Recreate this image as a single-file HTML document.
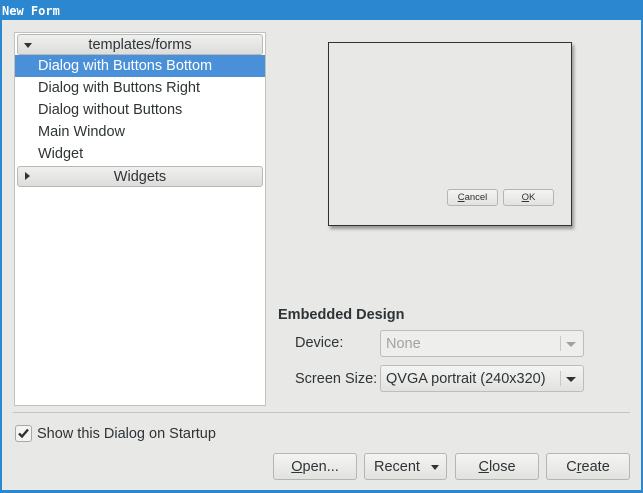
<!DOCTYPE html>
<html><head><style>
*{box-sizing:border-box;margin:0;padding:0}
body{width:643px;height:493px;overflow:hidden;background:#2a87d0;font-family:"Liberation Sans",sans-serif;font-size:14.5px;color:#2e3436;position:relative}
.a{position:absolute}
#title{left:0;top:0;width:643px;height:20px;color:#fff;font-family:"DejaVu Sans Mono","Liberation Mono",monospace;font-size:12px;font-weight:bold;line-height:22px;padding-left:2px}
#win{left:2px;top:20px;width:639px;height:470px;background:#e8e8e7}
#list{left:14px;top:32px;width:252px;height:374px;background:#fff;border:1px solid #c2c2c0}
.hdr{position:absolute;left:2px;width:246px;height:21px;border:1px solid #b8b8b5;border-radius:3px;background:linear-gradient(#f0f0ef,#dddddb);text-align:center;line-height:20px;color:#2e3436}
.row{position:absolute;left:0;width:250px;height:22px;line-height:23px;padding-left:23px}
.sel{background:#4a90d9;color:#fff}
.btn{position:absolute;height:27px;border:1px solid #b5b5b2;border-radius:3px;background:linear-gradient(#f4f4f3,#e2e2e0);text-align:center;line-height:26px;color:#2e3436}
.combo{position:absolute;left:380px;width:204px;height:27px;border:1px solid #bdbdbb;border-radius:3px;line-height:26px;padding-left:5px}
.combo .sep{position:absolute;right:22px;top:5px;width:1px;height:15px;background:#c8c8c6}
.tri{position:absolute;width:0;height:0;border-left:5px solid transparent;border-right:5px solid transparent;border-top:5px solid #2e3436}
</style></head><body>
<div id="title" class="a">New Form</div>
<div id="win" class="a"></div>
<div id="list" class="a">
 <div class="hdr" style="top:1px"><span class="tri" style="left:6px;top:8px;border-left-width:4px;border-right-width:4px"></span>templates/forms</div>
 <div class="row sel" style="top:22px">Dialog with Buttons Bottom</div>
 <div class="row" style="top:44px">Dialog with Buttons Right</div>
 <div class="row" style="top:66px">Dialog without Buttons</div>
 <div class="row" style="top:88px">Main Window</div>
 <div class="row" style="top:110px">Widget</div>
 <div class="hdr" style="top:133px"><span class="a" style="left:7px;top:5px;width:0;height:0;border-top:4px solid transparent;border-bottom:4px solid transparent;border-left:5px solid #2e3436"></span>Widgets</div>
</div>
<div class="a" style="left:328px;top:42px;width:244px;height:184px;background:#e8e8e7;border:1px solid #2e3436;box-shadow:2px 3px 3px rgba(0,0,0,.35)">
 <div class="btn" style="left:118px;top:146px;width:51px;height:17px;line-height:16px;font-size:9.5px"><u>C</u>ancel</div>
 <div class="btn" style="left:174px;top:146px;width:51px;height:17px;line-height:16px;font-size:9.5px"><u>O</u>K</div>
</div>
<div class="a" style="left:278px;top:307px;font-weight:bold">Embedded Design</div>
<div class="a" style="left:295px;top:335px">Device:</div>
<div class="combo" style="top:330px;color:#a0a2a0;background:#eeeeed">None<span class="sep"></span><span class="tri" style="right:7px;top:11px;border-top-color:#a0a2a0"></span></div>
<div class="a" style="left:295px;top:371px">Screen Size:</div>
<div class="combo" style="top:365px;background:linear-gradient(#f4f4f3,#e2e2e0)">QVGA portrait (240x320)<span class="sep"></span><span class="tri" style="right:7px;top:11px"></span></div>
<div class="a" style="left:13px;top:412px;width:617px;height:1px;background:#c4c4c2"></div>
<div class="a" style="left:15px;top:425px;width:17px;height:17px;border:1px solid #a8a8a6;border-radius:3px;background:#f4f4f3">
<svg width="15" height="15" viewBox="0 0 15 15" style="position:absolute;left:0;top:0"><path d="M3 7.5 L6 10.5 L12 3.5" fill="none" stroke="#2e3436" stroke-width="2.4"/></svg></div>
<div class="a" style="left:37px;top:426px">Show this Dialog on Startup</div>
<div class="btn" style="left:273px;top:453px;width:84px"><u>O</u>pen...</div>
<div class="btn" style="left:364px;top:453px;width:83px;text-align:left;padding-left:9px">Recent<span class="tri" style="right:7px;top:11px;border-left-width:4px;border-right-width:4px"></span></div>
<div class="btn" style="left:455px;top:453px;width:84px"><u>C</u>lose</div>
<div class="btn" style="left:546px;top:453px;width:84px">C<u>r</u>eate</div>
</body></html>
